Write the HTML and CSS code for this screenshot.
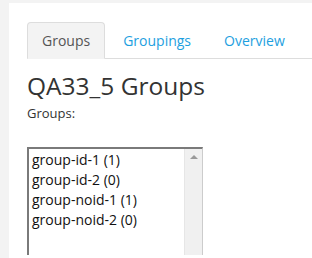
FILE: index.html
```html
<!DOCTYPE html>
<html>
<head>
<meta charset="utf-8">
<link rel="stylesheet" href="styles.css">
</head>
<body>
<div class="panel">
  <ul class="tabs">
    <li class="tab active">Groups</li>
    <li class="tab">Groupings</li>
    <li class="tab">Overview</li>
  </ul>
  <h2 class="title">QA33_5 Groups</h2>
  <div class="label">Groups:</div>
  <div class="listbox">
    <div class="options">
      <div class="opt">group-id-1 (1)</div>
      <div class="opt">group-id-2 (0)</div>
      <div class="opt">group-noid-1 (1)</div>
      <div class="opt">group-noid-2 (0)</div>
    </div>
    <div class="scroll"><span class="arrow"></span></div>
  </div>
</div>
</body>
</html>
```

FILE: styles.css
```css
html, body {
  margin: 0;
  padding: 0;
  background: #f3f3f3;
  font-family: "Open Sans", sans-serif;
  color: #333;
  overflow: hidden;
}
.panel {
  margin: 3px 0 0 9px;
  background: #fff;
  height: 255px;
  padding: 19px 0 0 18px;
  box-sizing: border-box;
}
.tabs {
  list-style: none;
  margin: 0;
  padding: 0;
  display: flex;
  border-bottom: 1px solid #ddd;
}
.tab {
  font-size: 14px;
  line-height: 20px;
  padding: 8px 14px 7px;
  margin-right: 3px;
  margin-bottom: -1px;
  color: #1ea0e0;
  border: 1px solid transparent;
  border-radius: 4px 4px 0 0;
}
.tab.active {
  color: #555;
  background: #f3f3f3;
  border-color: #ddd #ddd transparent;
}
.title {
  font-size: 24.5px;
  font-weight: 400;
  margin: 10px 0 0;
  line-height: 34px;
  color: #333;
}
.label {
  font-size: 13px;
  line-height: 18px;
  margin-top: 1px;
}
.listbox {
  margin-top: 25px;
  width: 173px;
  height: 106px;
  border-top: 2px solid #7a7a7a;
  border-left: 2px solid #7a7a7a;
  border-right: 1px solid #ccc;
  display: flex;
}
.options {
  flex: 1;
  padding: 1px 0 0 3px;
}
.opt {
  font-size: 14px;
  line-height: 20px;
  color: #111;
}
.scroll {
  width: 17px;
  background: #f0f0f0;
  border-left: 1px solid #e6e6e6;
  display: flex;
  justify-content: center;
  padding-top: 6px;
}
.arrow {
  width: 0;
  height: 0;
  border-left: 4px solid transparent;
  border-right: 4px solid transparent;
  border-bottom: 4px solid #9a9a9a;
}
```
